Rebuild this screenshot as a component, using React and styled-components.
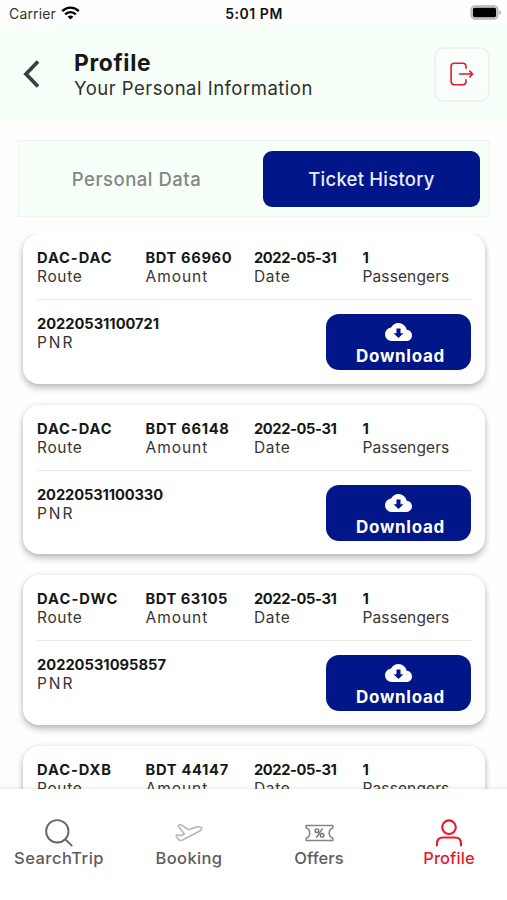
import React from "react";
import styled, { createGlobalStyle } from "styled-components";

const NAVY = "#001689";
const RED = "#e8192c";

const GlobalStyle = createGlobalStyle`
  * { box-sizing: border-box; }
  body { margin: 0; background: #fefefe; }
`;

const Screen = styled.div`
  width: 507px;
  height: 900px;
  display: flex;
  flex-direction: column;
  overflow: hidden;
  background: #fefefe;
  color: #161816;
  font-family: Inter, "Open Sans", sans-serif;
  white-space: nowrap;
`;

const StatusBar = styled.div`
  flex: none;
  height: 25px;
  padding: 3px 5px 0 9px;
  display: grid;
  grid-template-columns: 1fr auto 1fr;
  align-items: center;
  font-size: 14px;
  line-height: 22px;
`;

const Carrier = styled.div`
  display: flex;
  align-items: center;
  gap: 5px;
  color: #333;
  letter-spacing: 0.16px;
  svg { margin-top: -2px; }
`;

const Clock = styled.div`
  font-weight: 600;
  color: #111;
  letter-spacing: 0.55px;
  margin: 0 -1px 0 -4px;
`;

const BatterySlot = styled.div`
  display: flex;
  justify-content: flex-end;
  margin-top: -3px;
`;

const Header = styled.header`
  flex: none;
  height: 100px;
  padding: 0 17px 2px 23px;
  display: flex;
  align-items: center;
  background: linear-gradient(#fcfffc, #f7fff9 4px, #f7fff9 94px, #fefefe);
`;

const Heading = styled.div`
  flex: 1;
  margin: 2px 0 0 34px;
`;

const Title = styled.h1`
  margin: 0;
  font-size: 22.8px;
  font-weight: 700;
  line-height: 26px;
  letter-spacing: 0.65px;
`;

const Subtitle = styled.p`
  margin: 0;
  font-size: 18.5px;
  line-height: 25px;
  letter-spacing: 0.5px;
  color: #2c302d;
`;

const LogoutButton = styled.button`
  width: 56px;
  height: 55px;
  padding: 0;
  display: grid;
  place-items: center;
  border: 2px solid #eff3f0;
  border-radius: 10px;
  background: #fafffb;
`;

const Tabs = styled.div`
  flex: none;
  height: 77px;
  margin: 15px 17px 0 18px;
  padding: 10px 9px 9px 8px;
  display: grid;
  grid-template-columns: 236px 1fr;
  border: 1px solid #ecf5f0;
  background: #f7fff9;
`;

const Tab = styled.button`
  border: 0;
  border-radius: 9px;
  padding: 0;
  font: 500 18.5px/56px Inter, sans-serif;
  letter-spacing: ${(p) => (p.$active ? 0.23 : 0.5)}px;
  color: ${(p) => (p.$active ? "#e9ecff" : "#848785")};
  background: ${(p) => (p.$active ? NAVY : "transparent")};
  padding-right: ${(p) => (p.$active ? 0 : 17)}px;
`;

const TicketList = styled.main`
  flex: 1;
  min-height: 0;
  margin: 17px 17px 0 18px;
  padding: 0 5px;
  overflow: hidden;
  display: flex;
  flex-direction: column;
  gap: 21px;
`;

const Card = styled.article`
  flex: none;
  height: 149.5px;
  padding: 15px 14px 0 14px;
  border-radius: 16px;
  background: #fff;
  box-shadow: 0 4px 7px rgba(0, 0, 0, 0.25), 0 0 5px rgba(0, 0, 0, 0.08);
`;

const Facts = styled.div`
  display: grid;
  grid-template-columns: repeat(4, 108.5px);
  height: 50px;
  margin-right: -10px;
`;

const Divider = styled.div`
  height: 1px;
  background: #e9e9e9;
`;

const CardFooter = styled.div`
  display: flex;
  justify-content: space-between;
  padding-top: 14px;
`;

const Pnr = styled.div`
  padding-top: 1px;
`;

const Value = styled.div`
  font-size: 14.7px;
  font-weight: 700;
  line-height: 19px;
  letter-spacing: ${(p) => p.$tracking}px;
`;

const Label = styled.div`
  font-size: 15.5px;
  line-height: 18.5px;
  letter-spacing: ${(p) => p.$tracking}px;
  color: #363636;
`;

const DownloadButton = styled.button`
  width: 145px;
  height: 56px;
  padding: 9px 0 0 4px;
  display: flex;
  flex-direction: column;
  align-items: center;
  border: 0;
  border-radius: 13px;
  background: ${NAVY};
  color: #fff;
  font: 700 17px/26px Inter, sans-serif;
  letter-spacing: 0.7px;
  svg { flex: none; margin: 0 4px 2px 0; }
`;

const BottomNav = styled.nav`
  position: relative;
  flex: none;
  height: 111px;
  margin: 0 -7px 0 -6px;
  display: grid;
  grid-template-columns: repeat(4, 130px);
  background: #fff;
  box-shadow: 0 -1px 4px rgba(0, 0, 0, 0.1);
`;

const NavItem = styled.a`
  display: flex;
  flex-direction: column;
  align-items: center;
  padding-top: 29px;
  font-size: 16.5px;
  font-weight: 500;
  line-height: 22px;
  letter-spacing: ${(p) => p.$tracking}px;
  color: ${(p) => (p.$active ? RED : "#5d5d5d")};
`;

const NavIcon = styled.span`
  height: 29px;
  display: flex;
  align-items: center;
`;

const WifiIcon = () => (
  <svg width="19" height="14" viewBox="0 0 19 14" fill="none" stroke="#000" strokeWidth="2.4">
    <path d="M1.2 5.2C6 .4 13 .4 17.8 5.2M4.2 8.3c3-2.9 7.6-2.9 10.6 0" />
    <path d="M9.5 13.5 6.6 10.7c1.7-1.5 4.1-1.5 5.8 0z" fill="#000" stroke="none" />
  </svg>
);

const BatteryIcon = () => (
  <svg width="32" height="15" viewBox="0 0 32 15">
    <rect x="1.2" y="1" width="26.6" height="13" rx="3.8" fill="#d8d8d8" stroke="#b4b4b4" strokeWidth="1.5" />
    <rect x="2.9" y="2.8" width="23.2" height="9.4" rx="1.6" fill="#000" />
    <path d="M29.3 5.2c2.2.8 2.2 3.8 0 4.6z" fill="#aaa" />
  </svg>
);

const BackIcon = () => (
  <svg width="17" height="28" viewBox="0 0 17 28" fill="none" stroke="#3c403d" strokeWidth="3.8">
    <path d="M15 1.5 3 14l12 12.5" />
  </svg>
);

const LogoutIcon = () => (
  <svg width="24" height="24" viewBox="0 0 24 24" fill="none" stroke={RED} strokeWidth="1.6" strokeLinecap="round" strokeLinejoin="round">
    <path d="M16 6.2V4.5C16 2.3 15 1.3 12.8 1.3H4.2C2.1 1.3 1.1 2.3 1.1 4.4v15.2c0 2.1 1 3.1 3.1 3.1h8.6c2.2 0 3.2-1 3.2-3.2v-1.7M9.5 12h13M19.8 9.1l2.9 2.9-2.9 2.9" />
  </svg>
);

const CloudIcon = () => (
  <svg width="27" height="18" viewBox="0 4 24 16" fill="#fff">
    <path
      fillRule="evenodd"
      d="M19.35 10.04A7.49 7.49 0 0 0 12 4C9.11 4 6.6 5.64 5.35 8.04A5.994 5.994 0 0 0 0 14c0 3.31 2.69 6 6 6h13c2.76 0 5-2.24 5-5 0-2.64-2.05-4.78-4.65-4.96zM16.4 13.2 12 17.4l-4.4-4.2h2.6V8.8h3.6v4.4z"
    />
  </svg>
);

const SearchIcon = () => (
  <svg width="28" height="28" viewBox="0 0 28 28" fill="none" stroke="#666" strokeWidth="1.9">
    <circle cx="12.3" cy="12.3" r="11.2" />
    <path d="m20.2 20.2 7 7" />
  </svg>
);

const PlaneIcon = () => (
  <svg width="28" height="20" viewBox="0 0 28 20" fill="none" stroke="#b8b8b8" strokeWidth="1.7" strokeLinejoin="round">
    <path d="M3.4 3.2C3.2 2.2 5.3 1.4 6.3 2l7.4 4.7 6.2-2.2c3-1 6.2-.9 6.7.6.4 1.4-1.1 2.5-3.6 3.8L7.4 17.1c-1.5.7-2.5.6-3.5-.5L1.4 13.7c-.7-.9.6-1.9 1.7-1.7l3.2.6L9.4 11z" />
  </svg>
);

const OffersIcon = () => (
  <svg width="29" height="18" viewBox="0 0 29 18" fill="none" stroke="#858585" strokeWidth="1.5" strokeLinejoin="round">
    <path d="M1.1 1.4v2.4c4.9 1.6 4.9 8.8 0 10.4v2.4h26.8v-2.4c-4.9-1.6-4.9-8.8 0-10.4V1.4z" />
    <g stroke="#6e6e6e" strokeWidth="1.4">
      <circle cx="11.9" cy="6.7" r="1.8" />
      <circle cx="17.1" cy="11.3" r="1.8" />
      <path d="m17.6 4.4-6.2 9.2" />
    </g>
  </svg>
);

const ProfileIcon = () => (
  <svg width="28" height="28" viewBox="0 0 28 28" fill="none" stroke={RED} strokeWidth="2.1">
    <circle cx="14" cy="8.2" r="6.8" />
    <path d="M2 27.3v-2.6c0-4 2-6.2 6-6.2h12c4 0 6 2.2 6 6.2v2.6" />
  </svg>
);

const tickets = [
  { route: ["DAC-DAC", 0.89], amount: ["BDT 66960", 0.62], pnr: ["20220531100721", -0.05] },
  { route: ["DAC-DAC", 0.89], amount: ["BDT 66148", 0.66], pnr: ["20220531100330", -0.13] },
  { route: ["DAC-DWC", 1.06], amount: ["BDT 63105", 0.52], pnr: ["20220531095857", -0.01] },
  { route: ["DAC-DXB", 0.93], amount: ["BDT 44147", 0.69] },
];

const Fact = ({ value, label, tracking, labelTracking }) => (
  <div>
    <Value $tracking={tracking}>{value}</Value>
    <Label $tracking={labelTracking}>{label}</Label>
  </div>
);

const Ticket = ({ route, amount, pnr }) => (
  <Card>
    <Facts>
      <Fact value={route[0]} tracking={route[1]} label="Route" labelTracking={0.65} />
      <Fact value={amount[0]} tracking={amount[1]} label="Amount" labelTracking={0.95} />
      <Fact value="2022-05-31" tracking={-0.4} label="Date" labelTracking={0.65} />
      <Fact value="1" tracking={0} label="Passengers" labelTracking={0.12} />
    </Facts>
    <Divider />
    {pnr && (
      <CardFooter>
        <Pnr>
          <Fact value={pnr[0]} tracking={pnr[1]} label="PNR" labelTracking={1.9} />
        </Pnr>
        <DownloadButton>
          <CloudIcon />
          Download
        </DownloadButton>
      </CardFooter>
    )}
  </Card>
);

export default function App() {
  return (
    <Screen>
      <GlobalStyle />
      <StatusBar>
        <Carrier>Carrier <WifiIcon /></Carrier>
        <Clock>5:01 PM</Clock>
        <BatterySlot><BatteryIcon /></BatterySlot>
      </StatusBar>
      <Header>
        <BackIcon />
        <Heading>
          <Title>Profile</Title>
          <Subtitle>Your Personal Information</Subtitle>
        </Heading>
        <LogoutButton aria-label="Log out"><LogoutIcon /></LogoutButton>
      </Header>
      <Tabs>
        <Tab>Personal Data</Tab>
        <Tab $active>Ticket History</Tab>
      </Tabs>
      <TicketList>
        {tickets.map((t) => <Ticket key={t.amount[0]} {...t} />)}
      </TicketList>
      <BottomNav>
        <NavItem $tracking={0.5}><NavIcon><SearchIcon /></NavIcon>SearchTrip</NavItem>
        <NavItem $tracking={0.38}><NavIcon><PlaneIcon /></NavIcon>Booking</NavItem>
        <NavItem $tracking={0.08}><NavIcon><OffersIcon /></NavIcon>Offers</NavItem>
        <NavItem $tracking={0.08} $active><NavIcon><ProfileIcon /></NavIcon>Profile</NavItem>
      </BottomNav>
    </Screen>
  );
}
